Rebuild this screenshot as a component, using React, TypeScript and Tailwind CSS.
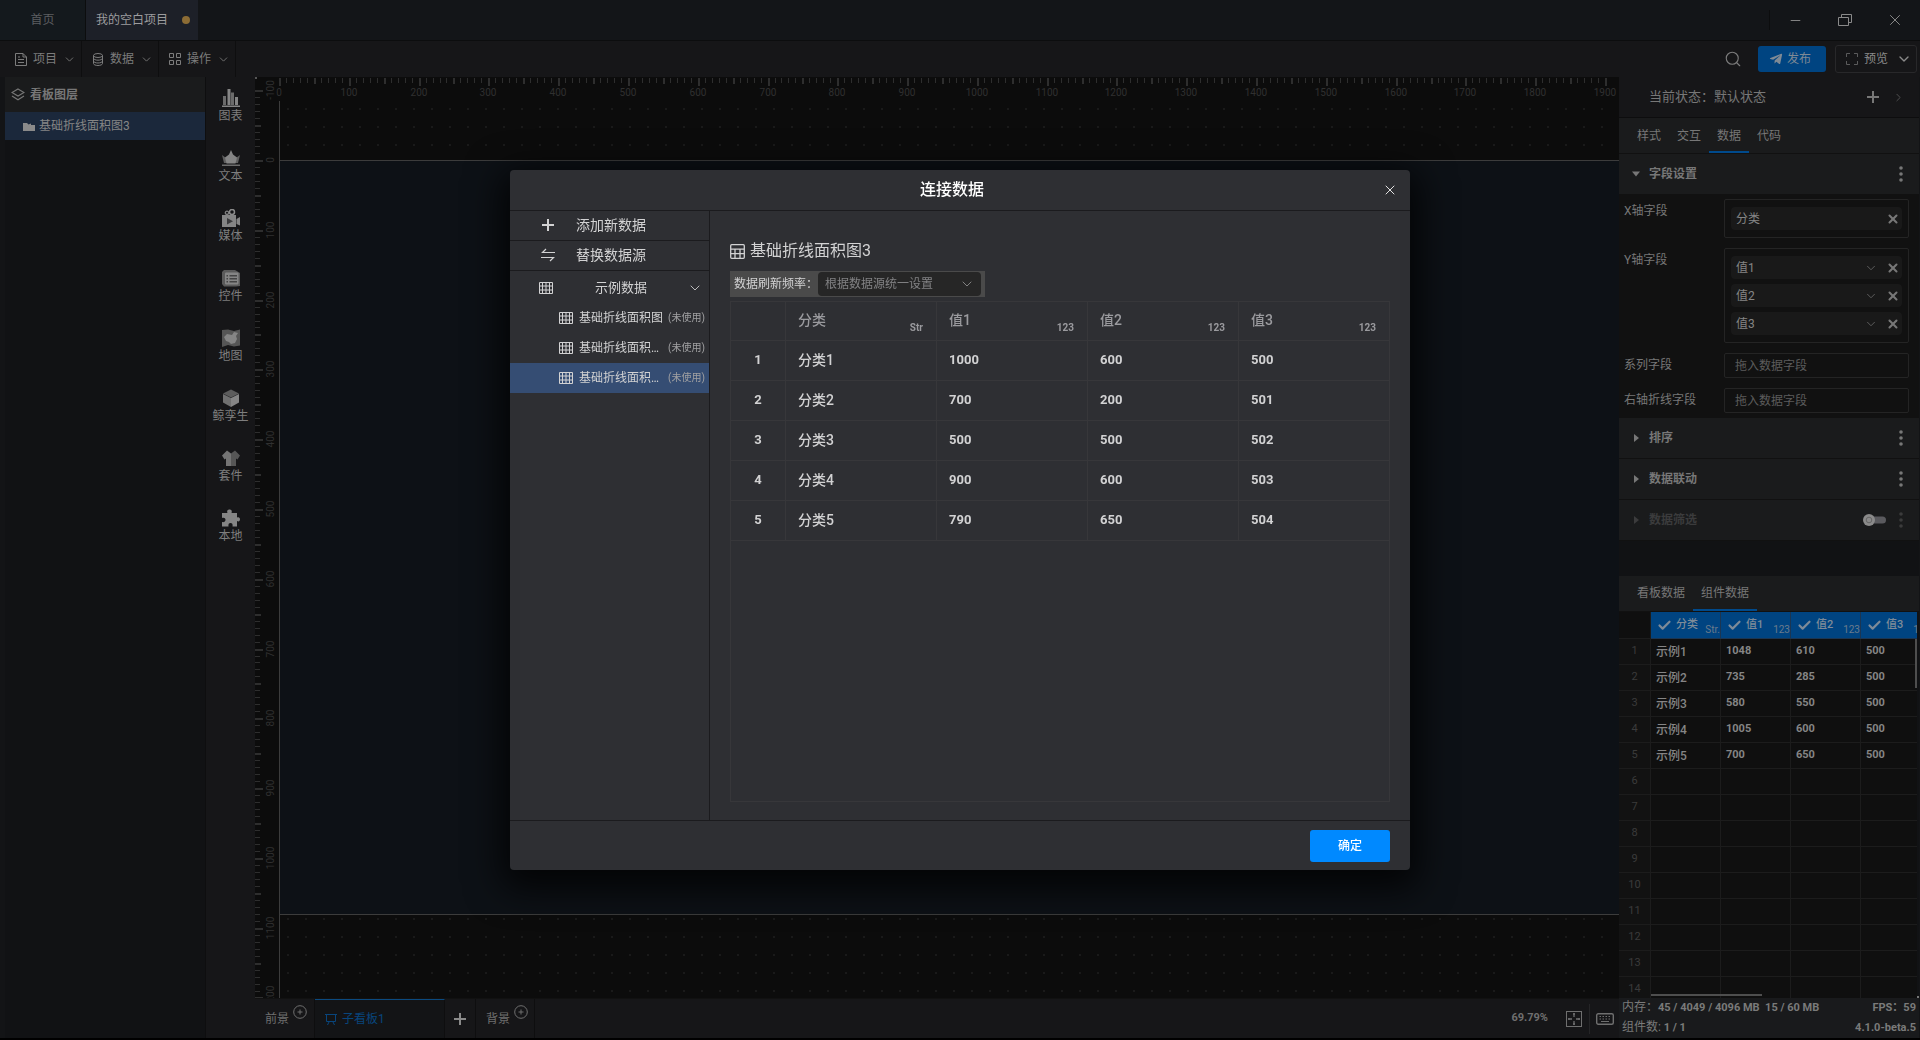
import type { ReactNode } from 'react'
import { Check, ChevronDown, ChevronRight, Minus, Plus, Search, X } from 'lucide-react'
import { FaTelegramPlane } from 'react-icons/fa'

const chartRows = [
  ['分类1', '1000', '600', '500'],
  ['分类2', '700', '200', '501'],
  ['分类3', '500', '500', '502'],
  ['分类4', '900', '600', '503'],
  ['分类5', '790', '650', '504'],
]

const sampleRows = [
  ['示例1', '1048', '610', '500'],
  ['示例2', '735', '285', '500'],
  ['示例3', '580', '550', '500'],
  ['示例4', '1005', '600', '500'],
  ['示例5', '700', '650', '500'],
]

const columns = [
  { name: '分类', type: 'Str.' },
  { name: '值1', type: '123' },
  { name: '值2', type: '123' },
  { name: '值3', type: '123' },
]

const ZOOM = 0.6979

function FileIcon() {
  return (
    <svg width="12" height="13" viewBox="0 0 12 13" fill="none" stroke="currentColor">
      <path d="M.5 .5h7.5l3.5 3.5v8.500h-11zM8 .5v3.500h3.500M3 6.500h6M3 9.500h6M3 4h2" />
    </svg>
  )
}

function DatabaseIcon() {
  return (
    <svg width="12" height="13" viewBox="0 0 12 13" fill="none" stroke="currentColor">
      <ellipse cx="6" cy="2.500" rx="4.500" ry="2" />
      <path d="M1.500 2.500v8c0 1.100 2 2 4.500 2s4.500-.9 4.500-2v-8M1.500 5.200c0 1.100 2 2 4.500 2s4.500-.9 4.500-2M1.500 8c0 1.100 2 2 4.500 2s4.500-.9 4.500-2" />
    </svg>
  )
}

function GridIcon() {
  return (
    <svg width="12" height="12" viewBox="0 0 12 12" fill="none" stroke="currentColor">
      <path d="M.5 .5h4v4h-4zM7.500 .5h4v4h-4zM.5 7.500h4v4h-4zM7.500 7.500h4v4h-4z" />
    </svg>
  )
}

function LayersIcon() {
  return (
    <svg width="14" height="13" viewBox="0 0 14 13" fill="none" stroke="currentColor" strokeWidth="1.200">
      <path d="M7 1l6 3.500-6 3.500-6-3.500zM1 8l6 3.700L13 8" />
    </svg>
  )
}

function TableGridIcon() {
  return (
    <svg width="14" height="12" viewBox="0 0 14 12" fill="none" stroke="currentColor" className="shrink-0">
      <path d="M.5 .5h13v11h-13zM3.500 .5v11M7 .5v11M10.500 .5v11M.5 4h13M.5 8h13" />
    </svg>
  )
}

function SheetIcon() {
  return (
    <svg width="15" height="15" viewBox="0 0 15 15" fill="none" stroke="currentColor" strokeWidth="1.300">
      <rect x=".7" y=".7" width="13.600" height="13.600" rx="1" />
      <path d="M1 5.200h13M1 9.700h13M5 5v9M10 5v9" />
    </svg>
  )
}

function SwapIcon() {
  return (
    <svg width="14" height="14" viewBox="0 0 14 14" fill="none" stroke="currentColor" strokeWidth="1.200">
      <path d="M14 4.500H1.500L5 1M0 9.500h12.500L9 13" />
    </svg>
  )
}

function PlusIcon() {
  return (
    <svg width="14" height="14" viewBox="0 0 14 14" fill="none" stroke="currentColor" strokeWidth="2">
      <path d="M7 1v12M1 7h12" />
    </svg>
  )
}

function DotsIcon() {
  return (
    <svg width="4" height="16" viewBox="0 0 4 16" fill="currentColor">
      <circle cx="2" cy="2" r="1.800" />
      <circle cx="2" cy="8" r="1.800" />
      <circle cx="2" cy="14" r="1.800" />
    </svg>
  )
}

const tools: { label: string; icon: ReactNode }[] = [
  {
    label: '图表',
    icon: (
      <g>
        <path d="M1 7h3v9H1zM9 3.500h3V16H9z" fill="#6b6b6b" />
        <path d="M5.500 0h3v16h-3zM13 8h3v8h-3z" />
        <path d="M0 16.500h18V18H0z" />
      </g>
    ),
  },
  {
    label: '文本',
    icon: (
      <g>
        <path d="M0 6l4 3 1 5H2zM18 6l-4 3-1 5h3z" fill="#5f5f5f" />
        <path d="M9 1l2 4.500L15 8.500 13.500 14.500h-9L3 8.500 7 5.500z" />
        <path d="M0 15.500h18V17H0z" fill="#6b6b6b" />
      </g>
    ),
  },
  {
    label: '媒体',
    icon: (
      <g>
        <path d="M0 6h14v12H0zM14.500 10L18 8v8.500L14.500 15z" />
        <circle cx="5" cy="3.800" r="1.700" fill="none" stroke="#808080" strokeWidth="1.300" />
        <circle cx="10" cy="3" r="2.500" fill="none" stroke="#8c8c8c" strokeWidth="1.500" />
        <path d="M5 9v6.500L11 12.200z" fill="#3a3a3c" />
      </g>
    ),
  },
  {
    label: '控件',
    icon: (
      <g>
        <path d="M2 1h11l5 3v13l-4 .500H2L0 15V3z" fill="#5a5a5a" />
        <rect x="3" y="3.500" width="13.500" height="12" rx="1" />
        <path d="M4.500 6h1.500v1.500H4.500zM7.500 6H15v1.500H7.500zM4.500 9h1.500v1.500H4.500zM7.500 9H15v1.500H7.500zM4.500 12h1.500v1.500H4.500zM7.500 12H15v1.500H7.500z" fill="#444" />
      </g>
    ),
  },
  {
    label: '地图',
    icon: (
      <g>
        <path d="M0 1l6-.500 6 1.500 6-1.500v16l-6 1-6-1.500-6 2z" fill="#555" />
        <path d="M2 8l3-3 5 1 2-3 4 1-2 3 1 3-2 4-4 1-2-2-3-1z" />
      </g>
    ),
  },
  {
    label: '鲸孪生',
    icon: (
      <g>
        <path d="M9 .5l8 4-8 4-8-4z" fill="#5c5c5c" />
        <path d="M1 5l8 4v9l-8-4.500z" fill="#707070" />
        <path d="M17 5L9 9v9l8-4.500z" />
      </g>
    ),
  },
  {
    label: '套件',
    icon: (
      <g>
        <path d="M5 1.500L0 6.500l2.500 4L4 9.500V17h5V4.500z" fill="#747474" />
        <path d="M13 1.500l5 5-2.500 4-1.500-1V17H9V4.500z" fill="#565656" />
      </g>
    ),
  },
  {
    label: '本地',
    icon: (
      <path d="M0 4h5.500C4.500 1.500 6 .5 7.500 .5S10.500 1.500 9.500 4H15v4.500c2-1 3 .300 3 1.800s-1 2.800-3 1.700V17.500h-4.500c.500-2.500-.500-3.500-2-3.500s-2.500 1-2 3.500H0V13c2 .5 3.500-.5 3.500-2.200S2 8.300 0 9z" />
    ),
  },
]

// Ticks every 10 units, labels every 100
function Ruler({ vertical, start, offset, end }: { vertical?: boolean; start: number; offset: number; end: number }) {
  const ticks: number[] = []
  for (let v = start; v <= end; v += 10) ticks.push(v)
  return (
    <svg className={vertical ? 'h-full w-6' : 'h-6 w-full'}>
      {ticks.map((v) => {
        const pos = Math.round(offset + v * ZOOM)
        const major = v % 100 === 0
        const len = major ? 8 : v % 50 === 0 ? 6 : 5
        const size = v % 50 === 0 ? 2 : 1
        return (
          <g key={v}>
            <rect
              x={vertical ? 0 : pos}
              y={vertical ? pos : 1}
              width={vertical ? len : size}
              height={vertical ? size : len}
              fill="#2e2e2e"
            />
            {major && (
              <text
                x={vertical ? 0 : pos}
                y={vertical ? 0 : 19}
                transform={vertical ? `translate(19 ${pos}) rotate(-90)` : undefined}
                textAnchor="middle"
                fill="#303030"
                className="text-[10px]"
              >
                {v}
              </text>
            )}
          </g>
        )
      })}
    </svg>
  )
}

function TopBar() {
  return (
    <header>
      <div className="flex h-[41px] items-stretch border-b border-[#0c0d0e] bg-[#131518]">
        <button className="w-[86px] border-r border-[#0c0d0e] bg-[#14191d] text-[#5c5e61]">首页</button>
        <button className="flex w-28 items-center justify-between bg-[#1d2028] pr-2 pl-2.5 text-[#9c9c9e]">
          我的空白项目
          <span className="size-2 rounded-full bg-[#8c6c35]" />
        </button>
        <div className="ml-auto flex items-center text-[#8a8a8a]">
          <span className="h-5 w-px bg-[#0c0d0e]" />
          <button aria-label="最小化" className="flex w-[50px] justify-center">
            <Minus size={15} strokeWidth={1.5} />
          </button>
          <button aria-label="还原" className="flex w-[50px] justify-center">
            <svg width="14" height="12" viewBox="0 0 14 12" fill="none" stroke="currentColor">
              <path d="M.5 3.500h10v8H.5zM3.500 3.500v-3h10v8h-3" />
            </svg>
          </button>
          <button aria-label="关闭" className="flex w-[50px] justify-center">
            <X size={18} strokeWidth={1.3} />
          </button>
        </div>
      </div>
      <div className="flex h-9 items-center bg-[#161618] pl-[5px] text-[#7c7c7c]">
        {[
          { label: '项目', icon: <FileIcon /> },
          { label: '数据', icon: <DatabaseIcon /> },
          { label: '操作', icon: <GridIcon /> },
        ].map((m) => (
          <button key={m.label} className="flex h-full w-[77px] items-center gap-1.5 border-r border-[#0e0e0f] pl-2.5">
            {m.icon}
            {m.label}
            <ChevronDown size={13} strokeWidth={1.6} />
          </button>
        ))}
        <div className="ml-auto flex items-center pr-[3px]">
          <button aria-label="搜索" className="mr-4">
            <Search size={18} strokeWidth={1.5} />
          </button>
          <button className="mr-[9px] flex h-[26px] w-[68px] items-center gap-1 rounded-[3px] bg-[#004481] pl-[11px] text-[#7f8a95]">
            <FaTelegramPlane size={14} />
            发布
          </button>
          <button className="flex h-7 w-[82px] items-center gap-1.5 rounded-[3px] border border-[#28282a] pl-2.5 text-[#8a8a8a]">
            <svg width="12" height="12" viewBox="0 0 12 12" fill="none" stroke="currentColor" className="opacity-60">
              <path d="M.5 4V.5H4M8 .5h3.500V4M11.500 8v3.500H8M4 11.500H.5V8" />
            </svg>
            预览
            <ChevronDown size={16} strokeWidth={2} className="ml-0.5" />
          </button>
        </div>
      </div>
    </header>
  )
}

function LayerPanel() {
  return (
    <aside className="ml-[5px] w-[200px] shrink-0 bg-[#111214]">
      <h2 className="flex h-[35px] items-center gap-[5px] bg-[#1a1b1c] pl-1.5 font-bold text-[#777]">
        <LayersIcon />
        看板图层
      </h2>
      <button className="flex h-7 w-full items-center gap-1 bg-[#1b283b] pl-[18px] text-[#858585]">
        <svg width="12" height="9" viewBox="0 0 12 9" fill="#8a8a8a">
          <path d="M0 1h4l1.500 1.500L8 1.500V3h4v6H0z" />
        </svg>
        基础折线面积图3
      </button>
    </aside>
  )
}

function Toolbox() {
  return (
    <nav className="w-[50px] shrink-0 border-l border-[#0e0e0f] bg-[#161618]">
      {tools.map((t) => (
        <button key={t.label} className="flex h-[60px] w-full flex-col items-center pt-3 leading-[18px] text-[#7e7e7e]">
          <svg width="18" height="18" viewBox="0 0 18 18" fill="#858585">
            {t.icon}
          </svg>
          {t.label}
        </button>
      ))}
    </nav>
  )
}

function CirclePlus() {
  return (
    <svg width="14" height="14" viewBox="0 0 14 14" fill="none" stroke="currentColor" className="mb-3.5">
      <circle cx="7" cy="7" r="6.300" />
      <path d="M7 4.500v5M4.500 7h5" />
    </svg>
  )
}

function Workspace() {
  return (
    <main className="flex min-w-0 flex-1 flex-col">
      <div className="relative flex min-h-0 flex-1 bg-[#0c0c0c]">
        <span className="absolute top-0 left-0 size-0.5 bg-[#555]" />
        <div className="w-6 shrink-0">
          <Ruler vertical start={-100} offset={83} end={1200} />
        </div>
        <div className="flex min-w-0 flex-1 flex-col">
          <div className="-ml-3 shrink-0">
            <Ruler start={0} offset={12} end={1900} />
          </div>
          <div className="relative flex flex-1 flex-col border-l border-[#3c3c3c]">
            <svg className="absolute inset-0 h-full w-full">
              <pattern id="dots" width="18" height="18" patternUnits="userSpaceOnUse">
                <rect x="7" y="7" width="2" height="2" fill="#1a1a1a" />
              </pattern>
              <rect width="100%" height="100%" fill="url(#dots)" />
            </svg>
            <div className="relative mt-[59px] mb-[83px] flex-1 border-y border-[#3c3c3c] bg-[#0d1116]" />
          </div>
        </div>
      </div>
      <footer className="flex h-10 items-stretch border-t border-[#111] bg-[#161618] text-[#6f6f6f]">
        <button className="flex w-[60px] items-center gap-1 border-r border-[#0e0e0f] pl-2.5">
          前景
          <CirclePlus />
        </button>
        <button className="flex w-[130px] items-center gap-[5px] border-t border-r border-t-[#0b4a80] border-r-[#0e0e0f] bg-[#131416] pl-2.5 text-[#08457c]">
          <svg width="12" height="11" viewBox="0 0 12 11" fill="none" stroke="currentColor">
            <path d="M0 .5h12M1.500 .5v7h9v-7M4 8l-1.500 3M8 8l1.500 3" />
          </svg>
          子看板1
        </button>
        <button aria-label="添加看板" className="flex w-[31px] items-center justify-center border-r border-[#0e0e0f] text-[#8a8a8a]">
          <PlusIcon />
        </button>
        <button className="flex w-[59px] items-center gap-1 border-r border-[#0e0e0f] pl-2.5">
          背景
          <CirclePlus />
        </button>
        <div className="ml-auto flex items-center pr-[5px]">
          <span className="mr-[18px] text-[11px] font-bold">69.79%</span>
          <button aria-label="适应画布" className="mr-[7px]">
            <svg width="16" height="16" viewBox="0 0 16 16" fill="none" stroke="currentColor">
              <rect x=".5" y=".5" width="15" height="15" />
              <path d="M8 2v4M8 10v4M2 8h4M10 8h4M7 3h2M7 13h2M3 7v2M13 7v2" strokeWidth="1.300" />
            </svg>
          </button>
          <span className="mr-1.5 h-[30px] w-px bg-[#252527]" />
          <button aria-label="键盘">
            <svg width="18" height="12" viewBox="0 0 18 12" fill="none" stroke="currentColor">
              <rect x=".7" y=".7" width="16.600" height="10.600" rx="1.500" strokeWidth="1.400" />
              <path d="M3.500 3.500h11M3.500 6h11" strokeDasharray="1.500 1.500" />
              <path d="M5 8.500h8" />
            </svg>
          </button>
        </div>
      </footer>
    </main>
  )
}

function FieldTag({ label, select }: { label: string; select?: boolean }) {
  return (
    <div className="flex h-[23px] items-center rounded-sm bg-[#191919] pr-0.5 pl-[5px] text-[#858585]">
      <span className="flex-1">{label}</span>
      {select && (
        <button aria-label={`${label} 选项`} className="mr-2">
          <ChevronDown size={14} strokeWidth={1.3} className="text-[#707070]" />
        </button>
      )}
      <button aria-label={`移除 ${label}`}>
        <X size={14} strokeWidth={3.5} className="text-[#777]" />
      </button>
    </div>
  )
}

function Section({ title, open, disabled }: { title: string; open?: boolean; disabled?: boolean }) {
  return (
    <div className={`flex h-[41px] items-center border-b border-[#111] bg-[#1a1b1c] pl-3 ${disabled ? 'text-[#3b3b3c]' : 'text-[#777]'}`}>
      <button className="flex flex-1 items-center gap-2 font-bold">
        <svg width="10" height="10" viewBox="0 0 10 10" fill="currentColor">
          <path d={open ? 'M1 2.500h8L5 7.500z' : 'M3 1v8l5-4z'} />
        </svg>
        {title}
      </button>
      {disabled && (
        <label className="flex items-center" aria-label="数据筛选开关">
          <input type="checkbox" className="peer sr-only" />
          <svg width="24" height="12" viewBox="0 0 24 12">
            <rect x="4" y="2.500" width="19" height="7" rx="3.500" fill="#5a5a5e" />
            <circle cx="6" cy="6" r="6" fill="#8a8a8a" />
            <circle cx="6" cy="6" r="2.800" fill="none" stroke="#666" />
          </svg>
        </label>
      )}
      <button aria-label={`${title} 更多`} className="mr-4 ml-3">
        <DotsIcon />
      </button>
    </div>
  )
}

function SampleTable() {
  return (
    <div className="relative mr-0.5 h-[386px] overflow-hidden bg-[#0f0f0f]">
      <table className="w-[312px] table-fixed border-separate border-spacing-0 text-left text-[#858585]">
        <thead>
          <tr className="h-[27px]">
            <th className="w-8 border-r border-b border-[#1c1c1c] p-0" />
            {columns.map((c) => (
              <th key={c.name} className="w-[70px] border-r border-b border-[#1b3653] bg-[#004481] p-0 font-medium text-[#7e8b98]">
                <div className="flex h-[26px] items-center pl-1.5">
                  <label className="flex flex-1 items-center gap-1 text-[11px]">
                    <input type="checkbox" defaultChecked className="sr-only" />
                    <Check size={15} strokeWidth={3.5} />
                    {c.name}
                  </label>
                  <span className="self-end text-[10px] leading-4 font-normal text-[#6b7b8c]">{c.type}</span>
                </div>
              </th>
            ))}
          </tr>
        </thead>
        <tbody>
          {Array.from({ length: 14 }, (_, i) => (
            <tr key={i} className="h-[26px]">
              <td className="border-r border-b border-[#1c1c1c] bg-[#121212] p-0 text-center text-[11px] text-[#3b3b3b]">{i + 1}</td>
              {columns.map((c, j) => (
                <td
                  key={c.name}
                  className={`border-r border-b border-[#1c1c1c] p-0 pl-[5px] ${j === 0 ? 'font-medium' : 'text-[11px] font-bold'}`}
                >
                  {sampleRows[i]?.[j]}
                </td>
              ))}
            </tr>
          ))}
        </tbody>
      </table>
      <span className="absolute top-[27px] right-0 h-[49px] w-0.5 bg-[#4e4e4e]" />
      <span className="absolute bottom-0.5 left-8 h-0.5 w-[111px] bg-[#4e4e4e]" />
    </div>
  )
}

function PropertyPanel() {
  return (
    <aside className="mr-px flex w-[300px] shrink-0 flex-col bg-[#111214] text-[#777]">
      <div className="flex h-[41px] items-center border-b border-[#0d0d0e] bg-[#161618] pl-[30px] text-[13px]">
        <span className="flex-1">当前状态：默认状态</span>
        <button aria-label="添加状态">
          <PlusIcon />
        </button>
        <button aria-label="下一个状态" className="mr-[14px] ml-3 text-[#505050]">
          <ChevronRight size={13} strokeWidth={1.8} />
        </button>
      </div>
      <div className="flex h-9 border-b border-[#111] bg-[#1a1b1c] pl-2.5">
        {['样式', '交互', '数据', '代码'].map((t) => (
          <button key={t} className={`w-10 border-b-2 pt-0.5 ${t === '数据' ? 'border-[#004a8c]' : 'border-transparent'}`}>
            {t}
          </button>
        ))}
      </div>
      <Section title="字段设置" open />
      <div className="grid grid-cols-[100px_1fr] gap-y-2.5 bg-[#111] pt-1 pr-2.5 pb-[5px] pl-[5px]">
        <span className="leading-6">X轴字段</span>
        <div className="rounded-xs border border-[#242424] px-1.5 py-[7px]">
          <FieldTag label="分类" />
        </div>
        <span className="leading-6">Y轴字段</span>
        <div className="flex flex-col gap-[5px] rounded-xs border border-[#242424] px-1.5 py-[7px]">
          <FieldTag label="值1" select />
          <FieldTag label="值2" select />
          <FieldTag label="值3" select />
        </div>
        <label htmlFor="series" className="leading-6">系列字段</label>
        <input id="series" placeholder="拖入数据字段" className="h-[25px] w-full rounded-xs border border-[#242424] px-2.5 placeholder:text-[#5c5c5c]" />
        <label htmlFor="right-axis" className="leading-6">右轴折线字段</label>
        <input id="right-axis" placeholder="拖入数据字段" className="h-[25px] w-full rounded-xs border border-[#242424] px-2.5 placeholder:text-[#5c5c5c]" />
      </div>
      <Section title="排序" />
      <Section title="数据联动" />
      <Section title="数据筛选" disabled />
      <div className="mt-auto flex h-9 shrink-0 border-b border-[#111] bg-[#1a1b1c] pl-2.5">
        <button className="w-16 border-b-2 border-transparent">看板数据</button>
        <button className="w-16 border-b-2 border-[#004a8c]">组件数据</button>
      </div>
      <SampleTable />
      <footer className="relative h-10 shrink-0 bg-[#191a1c] px-[3px] text-[11px] leading-5 font-bold text-[#7a7a7a]">
        <span className="absolute -top-0.5 right-0 size-0.5 bg-[#777]" />
        <div className="flex justify-between whitespace-pre">
          <span><span className="text-xs font-normal">内存：</span>45 / 4049 / 4096 MB  15 / 60 MB</span>
          <span>FPS：59</span>
        </div>
        <div className="flex justify-between">
          <span><span className="text-xs font-normal">组件数:</span> 1 / 1</span>
          <span>4.1.0-beta.5</span>
        </div>
      </footer>
    </aside>
  )
}

function DataSourceItem({ name, active }: { name: string; active?: boolean }) {
  return (
    <button className={`flex h-[30px] w-full items-center pr-1 pl-[49px] ${active ? 'bg-[#354d73]' : ''}`}>
      <TableGridIcon />
      <span className="ml-[6px] w-[86px] truncate text-left">{name}</span>
      <span className="ml-1 text-[10px] whitespace-nowrap text-[#a0a0a2]">(未使用)</span>
    </button>
  )
}

function ConnectDataDialog() {
  return (
    <div className="fixed inset-0 flex items-center justify-center">
      <section
        role="dialog"
        aria-label="连接数据"
        className="flex w-[900px] flex-col rounded-sm bg-[#2e2f33] text-[#d2d2d3] shadow-[0_10px_36px_8px_rgba(0,0,0,0.8)]"
      >
        <header className="flex h-[41px] items-center border-b border-[#1b1b1e] pr-3 text-white">
          <h1 className="flex-1 pl-3 text-center text-base font-medium">连接数据</h1>
          <button aria-label="关闭">
            <X size={16} strokeWidth={1.3} />
          </button>
        </header>
        <div className="flex items-stretch">
          <div className="w-[200px] shrink-0 border-r border-[#1b1b1e]">
            <button className="flex h-[30px] w-full items-center gap-[21px] border-b border-[#1b1b1e] pb-0.5 pl-[31px] text-sm">
              <PlusIcon />
              添加新数据
            </button>
            <button className="mb-0.5 flex h-[30px] w-full items-center gap-[21px] border-b border-[#1b1b1e] pb-0.5 pl-[31px] text-sm">
              <SwapIcon />
              替换数据源
            </button>
            <button className="flex h-[30px] w-full items-center pr-1.5 pl-[29px] text-[13px]">
              <TableGridIcon />
              <span className="flex-1 pl-0.5 text-center">示例数据</span>
              <ChevronDown size={16} strokeWidth={1.3} />
            </button>
            <DataSourceItem name="基础折线面积图" />
            <DataSourceItem name="基础折线面积图2" />
            <DataSourceItem name="基础折线面积图3" active />
          </div>
          <div className="flex flex-1 flex-col px-5 pt-7 pb-[18px]">
            <h2 className="mb-2 flex h-6 items-center gap-[5px] text-base">
              <SheetIcon />
              基础折线面积图3
            </h2>
            <div className="mb-1 flex h-[26px] items-center self-start bg-[#4a4a4a] pr-1 pl-1">
              <label htmlFor="refresh" className="w-[84px]">数据刷新频率：</label>
              <div className="relative">
                <select
                  id="refresh"
                  className="block h-6 w-[163px] appearance-none rounded-sm bg-[#262626] pl-[7px] text-[#828284]"
                >
                  <option>根据数据源统一设置</option>
                </select>
                <ChevronDown size={16} strokeWidth={1.3} className="pointer-events-none absolute top-1 right-1.5 text-[#909090]" />
              </div>
            </div>
            <div className="min-h-[501px] border border-[#37373a]">
              <table className="w-full table-fixed border-separate border-spacing-0 text-left text-sm">
                <thead>
                  <tr className="h-[39px] text-[#9a9a9e]">
                    <th className="w-[54px] border-b border-[#37373a] p-0" />
                    {columns.map((c) => (
                      <th key={c.name} className="border-b border-l border-[#37373a] p-0 font-medium">
                        <div className="flex h-[38px] items-center justify-between pr-[13px] pb-0.5 pl-3">
                          {c.name}
                          <span className="self-end pb-0.5 text-[10px] leading-4 font-bold">{c.type === '123' ? '123' : 'Str'}</span>
                        </div>
                      </th>
                    ))}
                  </tr>
                </thead>
                <tbody>
                  {chartRows.map((row, i) => (
                    <tr key={row[0]} className="h-10">
                      <td className="border-b border-[#37373a] p-0 pb-px text-center text-[13px] font-bold">{i + 1}</td>
                      {row.map((cell, j) => (
                        <td
                          key={j}
                          className={`border-b border-l border-[#37373a] p-0 pb-px pl-3 ${j === 0 ? 'font-medium' : 'text-[13px] font-bold'}`}
                        >
                          {cell}
                        </td>
                      ))}
                    </tr>
                  ))}
                </tbody>
              </table>
            </div>
          </div>
        </div>
        <footer className="flex h-[50px] items-center justify-end border-t border-[#1b1b1e] pr-5">
          <button className="h-8 w-20 rounded-[3px] bg-[#0089ff] font-medium text-white">确定</button>
        </footer>
      </section>
    </div>
  )
}

export default function App() {
  return (
    <div className="flex h-screen flex-col overflow-hidden bg-[#131416] font-['Roboto','Noto_Sans_CJK_SC',sans-serif] text-xs">
      <TopBar />
      <div className="flex min-h-0 flex-1 border-b-2 border-black">
        <LayerPanel />
        <Toolbox />
        <Workspace />
        <PropertyPanel />
      </div>
      <ConnectDataDialog />
    </div>
  )
}
